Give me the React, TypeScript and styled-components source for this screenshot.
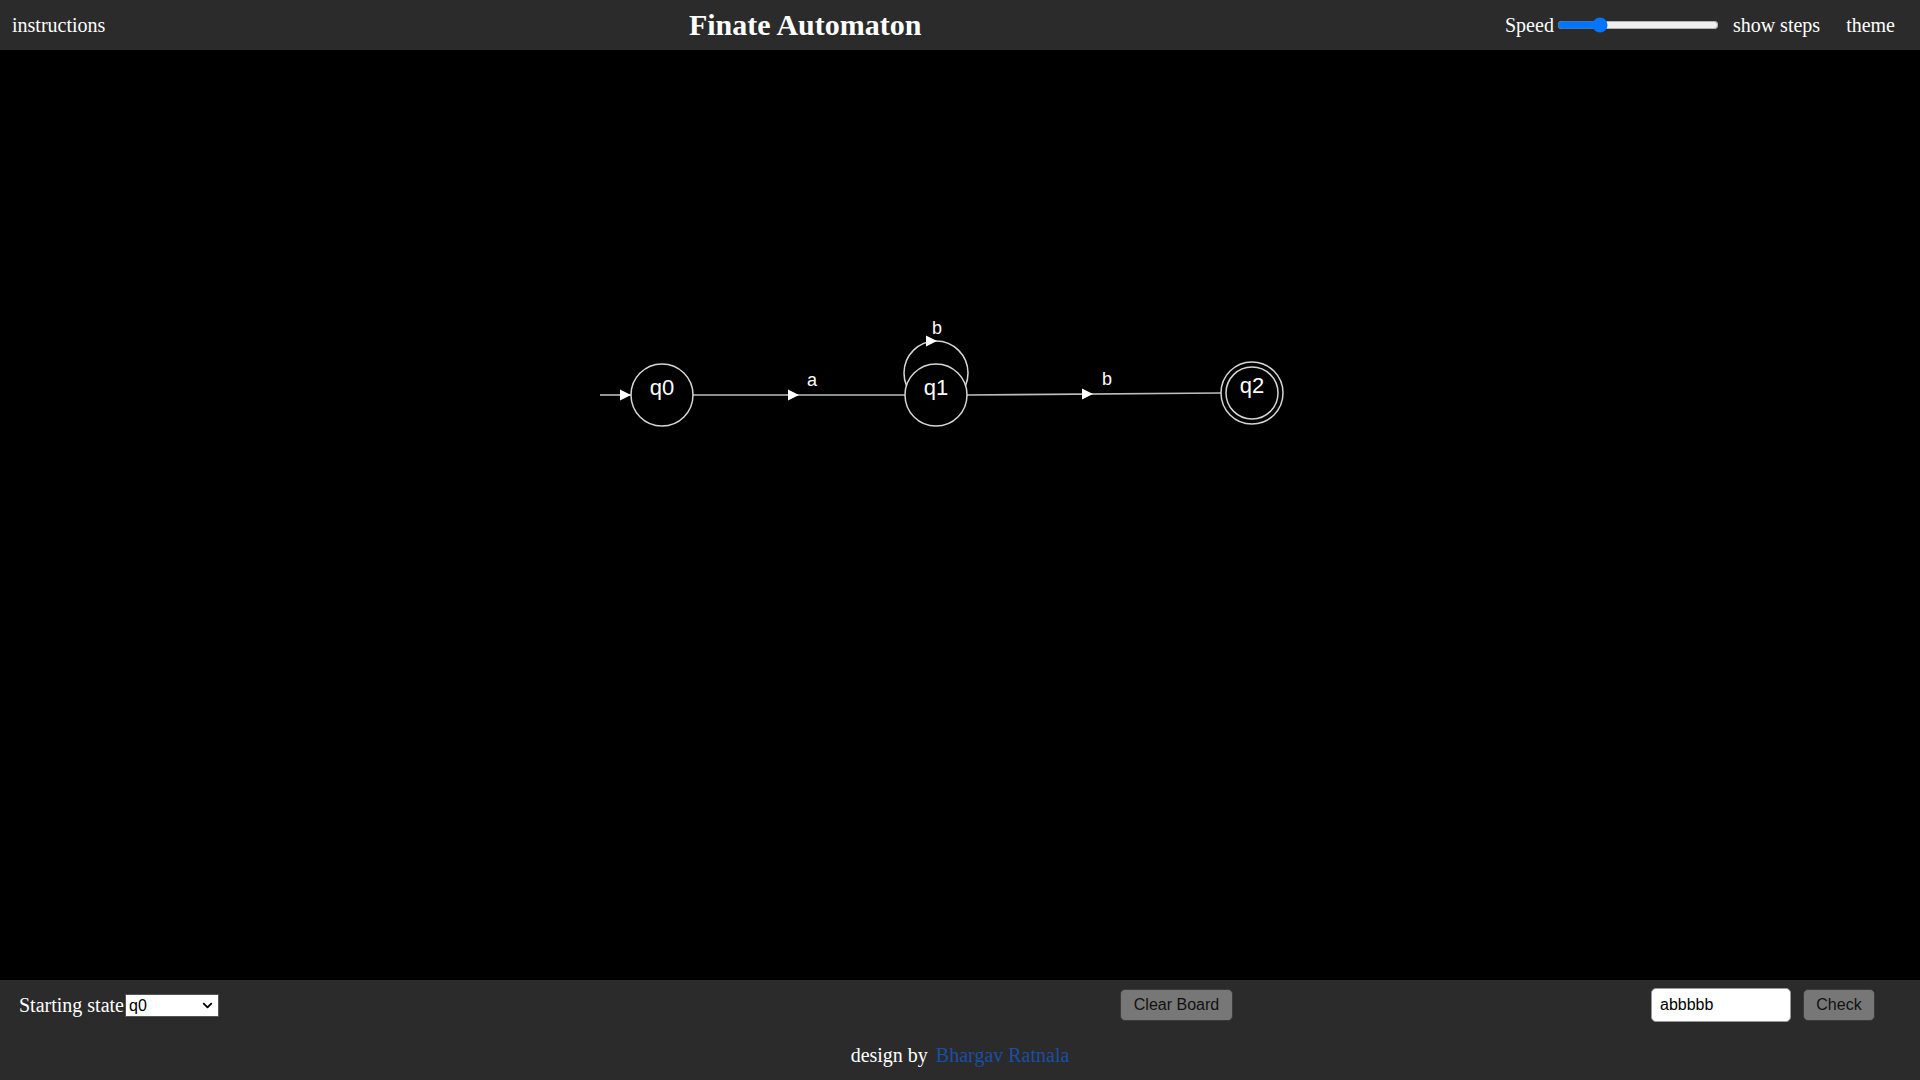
import React, { useState } from "react";
import styled, { createGlobalStyle } from "styled-components";
import { ChevronDown } from "lucide-react";

const GlobalStyle = createGlobalStyle`
  html, body {
    margin: 0;
    padding: 0;
    background: #000;
  }
  body {
    font-family: "Liberation Serif", "Times New Roman", serif;
    color: #fff;
  }
`;

const Page = styled.div`
  display: flex;
  flex-direction: column;
  height: 100vh;
  width: 100vw;
  overflow: hidden;
`;

const Header = styled.header`
  height: 50px;
  flex: 0 0 50px;
  display: flex;
  align-items: center;
  justify-content: space-between;
  padding: 0 25px 0 12px;
  background: #2b2b2b;
  box-sizing: border-box;
`;

const NavText = styled.span<{ $gap?: number }>`
  font-size: 20px;
  color: #fff;
  margin-left: ${(p) => p.$gap ?? 0}px;
  cursor: pointer;
`;

const Title = styled.h1`
  margin: 0;
  font-size: 30px;
  font-weight: bold;
  color: #fff;
  font-family: "Liberation Serif", "Times New Roman", serif;
`;

const RightGroup = styled.div`
  display: flex;
  align-items: center;
`;

const Slider = styled.input`
  width: 162px;
  margin: 0 0 0 3px;
  accent-color: #0075ff;
`;

const Board = styled.main`
  flex: 1 1 auto;
  background: #000;
  position: relative;
  overflow: hidden;
`;

const Diagram = styled.svg`
  display: block;
  width: 1920px;
  height: 930px;
`;

const Footer = styled.footer`
  flex: 0 0 100px;
  height: 100px;
  background: #2b2b2b;
  display: flex;
  flex-direction: column;
  box-sizing: border-box;
  padding-top: 8px;
`;

const ControlsRow = styled.div`
  height: 34px;
  display: flex;
  align-items: center;
  padding: 0 45px 0 19px;
`;

const StartGroup = styled.label`
  display: flex;
  align-items: center;
  font-size: 20px;
  color: #fff;
`;

const SelectWrap = styled.span`
  position: relative;
  display: inline-flex;
  margin-left: 1px;
`;

const StateSelect = styled.select`
  appearance: none;
  -webkit-appearance: none;
  width: 94px;
  height: 23px;
  font-family: Arial, "Liberation Sans", sans-serif;
  font-size: 16px;
  background: #fff;
  color: #000;
  border: 1px solid #555;
  border-radius: 0;
  padding: 0 0 0 3px;
`;

const SelectChevron = styled(ChevronDown)`
  position: absolute;
  right: 4px;
  top: 4px;
  width: 15px;
  height: 15px;
  color: #000;
  pointer-events: none;
`;

const GreyButton = styled.button<{ $w: number }>`
  width: ${(p) => p.$w}px;
  height: 32px;
  background: #777;
  color: #111;
  border: 1px solid #3a3a3a;
  border-radius: 5px;
  font-family: Arial, "Liberation Sans", sans-serif;
  font-size: 16px;
  padding: 0;
  cursor: pointer;
`;

const ClearWrap = styled.div`
  margin-left: auto;
  display: flex;
`;

const CheckGroup = styled.div`
  margin-left: 418px;
  display: flex;
  align-items: center;
  gap: 12px;
`;

const WordInput = styled.input`
  width: 140px;
  height: 34px;
  box-sizing: border-box;
  border: 1px solid #999;
  border-radius: 5px;
  padding: 0 8px;
  font-family: Arial, "Liberation Sans", sans-serif;
  font-size: 16px;
  color: #000;
  background: #fff;
  outline: none;
`;

const Credit = styled.div`
  margin-top: 22px;
  text-align: center;
  font-size: 20px;
  color: #fff;
`;

const CreditLink = styled.a`
  color: #1a4fa3;
  text-decoration: none;
  margin-left: 8px;
`;

const stroke = "#d6d6d6";
const lineColor = "#bdbdbd";
const OY = 50;

type StateNode = { id: string; x: number; y: number; final?: boolean };

const nodes: StateNode[] = [
  { id: "q0", x: 662, y: 395 },
  { id: "q1", x: 936, y: 395 },
  { id: "q2", x: 1252, y: 393, final: true },
];

const Arrow = ({ x, y }: { x: number; y: number }) => (
  <polygon points={`${x - 11},${y - 5.5} ${x},${y} ${x - 11},${y + 5.5}`} fill="#fff" />
);

const Label = ({ x, y, t, size = 18 }: { x: number; y: number; t: string; size?: number }) => (
  <text
    x={x}
    y={y}
    fill="#fff"
    fontSize={size}
    textAnchor="middle"
    fontFamily="Arial, 'Liberation Sans', sans-serif"
  >
    {t}
  </text>
);

export default function App() {
  const [speed, setSpeed] = useState(24);
  const [word, setWord] = useState("abbbbb");
  return (
    <Page>
      <GlobalStyle />
      <Header>
        <NavText>instructions</NavText>
        <Title>Finate Automaton</Title>
        <RightGroup>
          <NavText>Speed</NavText>
          <Slider
            type="range"
            min={0}
            max={100}
            value={speed}
            onChange={(e) => setSpeed(Number(e.target.value))}
          />
          <NavText $gap={14}>show steps</NavText>
          <NavText $gap={26}>theme</NavText>
        </RightGroup>
      </Header>
      <Board>
        <Diagram viewBox="0 0 1920 930">
          <g transform={`translate(0,${-OY})`}>
            {/* start arrow */}
            <line x1={600} y1={395} x2={631} y2={395} stroke={lineColor} strokeWidth={1.6} />
            <Arrow x={631} y={395} />
            {/* q0 -> q1 */}
            <line x1={693} y1={395} x2={905} y2={395} stroke={lineColor} strokeWidth={1.6} />
            <Arrow x={799} y={395} />
            <Label x={812} y={386} t="a" />
            {/* q1 self loop */}
            <circle cx={936} cy={373} r={32} fill="none" stroke={stroke} strokeWidth={1.5} />
            <Arrow x={937} y={341} />
            <Label x={937} y={334} t="b" />
            {/* q1 -> q2 */}
            <line x1={967} y1={395} x2={1221} y2={393} stroke={lineColor} strokeWidth={1.6} />
            <Arrow x={1093} y={394} />
            <Label x={1107} y={385} t="b" />
            {nodes.map((n) => (
              <g key={n.id}>
                <circle cx={n.x} cy={n.y} r={31} fill="#000" stroke={stroke} strokeWidth={1.5} />
                {n.final && (
                  <circle cx={n.x} cy={n.y} r={26} fill="none" stroke={stroke} strokeWidth={1.5} />
                )}
                <Label x={n.x} y={n.y} t={n.id} size={22} />
              </g>
            ))}
          </g>
        </Diagram>
      </Board>
      <Footer>
        <ControlsRow>
          <StartGroup>
            Starting state
            <SelectWrap>
              <StateSelect defaultValue="q0">
                <option value="q0">q0</option>
                <option value="q1">q1</option>
                <option value="q2">q2</option>
              </StateSelect>
              <SelectChevron strokeWidth={3} />
            </SelectWrap>
          </StartGroup>
          <ClearWrap>
            <GreyButton $w={113}>Clear Board</GreyButton>
          </ClearWrap>
          <CheckGroup>
            <WordInput value={word} onChange={(e) => setWord(e.target.value)} />
            <GreyButton $w={72}>Check</GreyButton>
          </CheckGroup>
        </ControlsRow>
        <Credit>
          design by
          <CreditLink href="#">Bhargav Ratnala</CreditLink>
        </Credit>
      </Footer>
    </Page>
  );
}
